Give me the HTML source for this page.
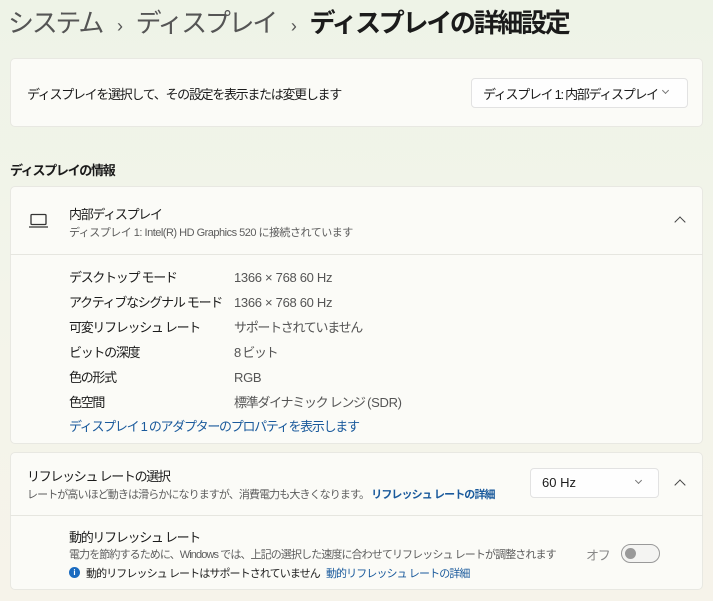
<!DOCTYPE html>
<html><head><meta charset="utf-8"><style>
*{margin:0;padding:0;box-sizing:border-box}
body{width:713px;height:601px;overflow:hidden;background:linear-gradient(180deg,#eef3e7 0%,#f3f4ea 50%,#f6f3ea 100%);font-family:"Liberation Sans","Noto Sans CJK JP",sans-serif;color:#1b1b1b;position:relative}
.a{position:absolute;white-space:nowrap}
.card{position:absolute;left:10px;width:693px;background:#fbfbf7;border:1px solid #e8e8e2;border-radius:5px}
.s{font-size:13px;letter-spacing:-1.3px}
.sm{font-size:11px;color:#5d5d5d;letter-spacing:-0.9px}
.lnk{color:#1a5a9c}
.dd{position:absolute;background:#fefefe;border:1px solid #e2e2e2;border-radius:4px}
.chev{position:absolute;width:7px;height:7px;border-right:1px solid #777;border-bottom:1px solid #777;transform:rotate(45deg)}
.up{position:absolute;width:8px;height:8px;border-left:1.3px solid #444;border-top:1.3px solid #444;transform:rotate(45deg)}
.v{letter-spacing:-0.3px}
</style></head><body>
<div class="a" style="left:8px;top:3px;font-size:26px;color:#555;letter-spacing:-2.3px">システム <span style="font-size:18px;margin:0 10px">›</span> ディスプレイ <span style="font-size:18px;margin:0 10px">›</span> <span style="color:#1b1b1b;font-weight:bold">ディスプレイの詳細設定</span></div>

<div class="card" style="top:58px;height:69px"></div>
<div class="a s" style="left:27px;top:84px">ディスプレイを選択して、その設定を表示または変更します</div>
<div class="dd" style="left:471px;top:78px;width:217px;height:30px"></div>
<div class="a s" style="left:483px;top:84px">ディスプレイ 1: 内部ディスプレイ</div>
<div class="chev" style="left:663px;top:88px;width:5px;height:5px"></div>

<div class="a" style="left:10px;top:160px;font-size:13px;font-weight:bold;letter-spacing:-1.3px">ディスプレイの情報</div>
<div class="card" style="top:186px;height:258px"></div>
<div class="a" style="left:10px;top:254px;width:693px;height:1px;background:#e6e6e0"></div>
<svg class="a" style="left:28px;top:213px" width="22" height="16" viewBox="0 0 22 16"><rect x="3" y="1.5" width="15" height="10" rx="1" fill="none" stroke="#333" stroke-width="1.3"/><line x1="1" y1="14" x2="20" y2="14" stroke="#333" stroke-width="1.3"/></svg>
<div class="a s" style="left:69px;top:204px">内部ディスプレイ</div>
<div class="a sm" style="left:69px;top:224px;letter-spacing:-0.5px">ディスプレイ 1: Intel(R) HD Graphics 520 に接続されています</div>
<div class="up" style="left:676px;top:218px"></div>
<div class="a s" style="left:69px;top:265px;line-height:25px">デスクトップ モード<br>アクティブなシグナル モード<br>可変リフレッシュ レート<br>ビットの深度<br>色の形式<br>色空間</div>
<div class="a s" style="left:234px;top:265px;line-height:25px;color:#555"><span class="v">1366 × 768 60 Hz</span><br><span class="v">1366 × 768 60 Hz</span><br>サポートされていません<br>8 ビット<br><span class="v">RGB</span><br>標準ダイナミック レンジ <span class="v">(SDR)</span></div>
<div class="a s lnk" style="left:69px;top:416px">ディスプレイ 1 のアダプターのプロパティを表示します</div>

<div class="card" style="top:452px;height:138px"></div>
<div class="a" style="left:10px;top:515px;width:693px;height:1px;background:#e6e6e0"></div>
<div class="a s" style="left:27px;top:466px">リフレッシュ レートの選択</div>
<div class="a sm" style="left:27px;top:486px">レートが高いほど動きは滑らかになりますが、消費電力も大きくなります。 <b class="lnk">リフレッシュ レートの詳細</b></div>
<div class="dd" style="left:530px;top:468px;width:129px;height:30px"></div>
<div class="a s" style="left:542px;top:475px;letter-spacing:0">60 Hz</div>
<div class="chev" style="left:636px;top:478px;width:5px;height:5px"></div>
<div class="up" style="left:676px;top:481px"></div>
<div class="a s" style="left:69px;top:527px">動的リフレッシュ レート</div>
<div class="a sm" style="left:69px;top:546px">電力を節約するために、Windows では、上記の選択した速度に合わせてリフレッシュ レートが調整されます</div>
<div class="a s" style="left:586px;top:545px;color:#888">オフ</div>
<div class="a" style="left:621px;top:544px;width:39px;height:19px;border:1px solid #999;border-radius:10px;background:#f4f4f2"></div>
<div class="a" style="left:625px;top:548px;width:11px;height:11px;border-radius:50%;background:#999"></div>
<div class="a" style="left:69px;top:567px;width:11px;height:11px;border-radius:50%;background:#1a6bc0;color:#fff;font-size:8px;text-align:center;line-height:11px;font-weight:bold">i</div>
<div class="a sm" style="left:86px;top:565px;color:#1b1b1b">動的リフレッシュ レートはサポートされていません <span class="lnk" style="margin-left:4px">動的リフレッシュ レートの詳細</span></div>
</body></html>
